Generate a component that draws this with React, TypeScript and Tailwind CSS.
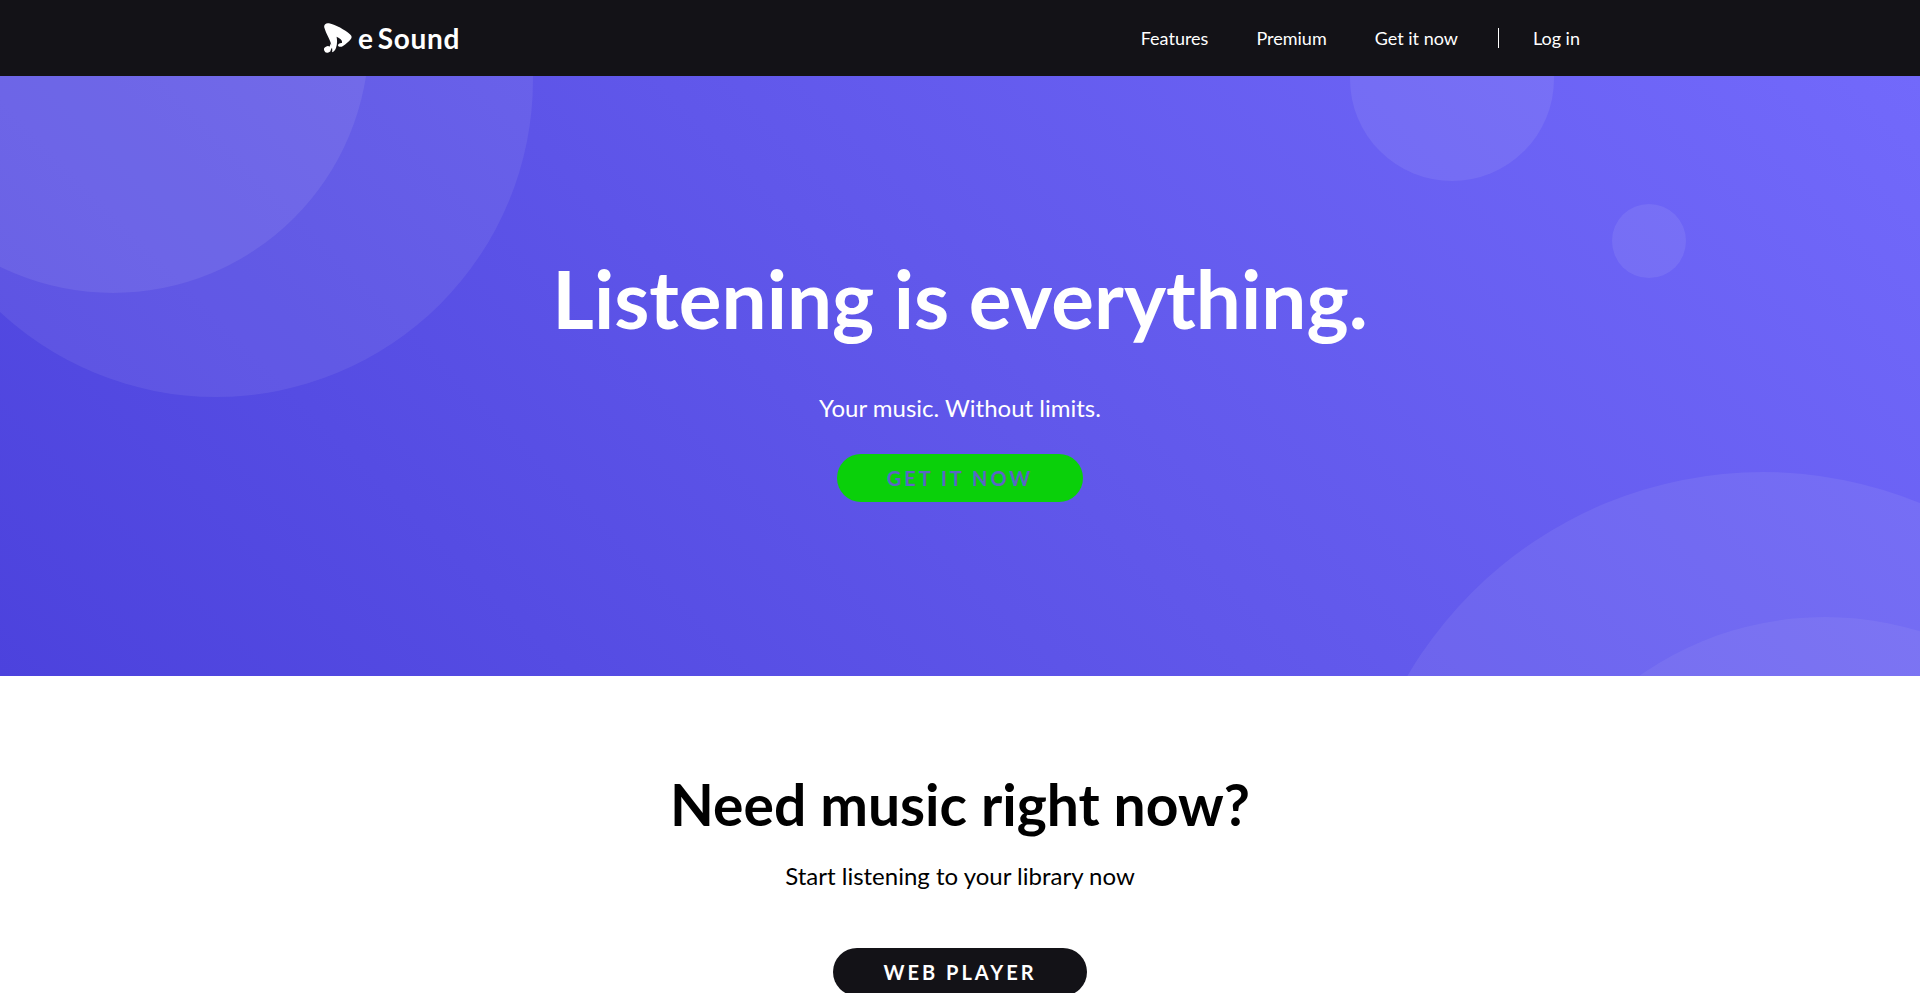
const navLinks = ['Features', 'Premium', 'Get it now'];

function Logo() {
  return (
    <a href="#" aria-label="eSound" className="flex items-center gap-1.5 text-white">
      <svg viewBox="0 0 28 30" className="h-[30px] w-7" fill="currentColor" aria-hidden="true">
        <path d="M0.3 4.6C-0.4 1.6 1.9-0.4 5 0.3C12 1.9 20.5 6.5 26.2 11.5C28 13.2 28.1 14.7 26.5 16.4C24.6 18.5 22 21 19 22.9C17.5 24.200 14.300 24.300 14 22.500C13.900 20.800 15.700 19.700 17.900 19.900C18.600 17.500 16.600 15.600 12.600 13.700C13.300 17.500 13.300 21.500 12 25C11.200 27.200 9.900 28.700 8 29.200C8.600 27.500 8.200 25.500 7.600 23C6.400 16.500 2 11 0.300 4.600Z" />
        <ellipse cx="3.4" cy="26.4" rx="3.4" ry="3.2" transform="rotate(-20 3.4 26.4)" />
        <path d="M5 25L7 20L8.5 24L6.5 27Z" />
      </svg>
      <span className="flex gap-1 text-[28px] font-bold leading-8 tracking-wide">
        <span>e</span>
        <span>Sound</span>
      </span>
    </a>
  );
}

function Header() {
  return (
    <header className="bg-[#131217]">
      <div className="mx-auto flex h-[76px] max-w-7xl items-center justify-between pl-1 pr-5">
        <Logo />
        <nav className="flex items-center text-lg text-white">
          <div className="flex items-center gap-12">
            {navLinks.map((label) => (
              <a key={label} href="#">{label}</a>
            ))}
          </div>
          <span className="ml-10 mr-[34px] h-5 w-px bg-white" />
          <a href="#">Log in</a>
        </nav>
      </div>
    </header>
  );
}

function Hero() {
  return (
    <section className="relative h-[600px] overflow-hidden bg-linear-45 from-[#4c42dd] via-[#6057ea] to-[#7269fb] text-white">
      <svg
        className="absolute inset-0 h-full w-full"
        viewBox="0 0 1920 600"
        preserveAspectRatio="xMidYMid slice"
        fill="white"
        aria-hidden="true"
      >
        <circle cx="216" cy="4" r="317" fillOpacity="0.07" />
        <circle cx="113" cy="-39" r="256" fillOpacity="0.08" />
        <circle cx="1452" cy="3" r="102" fillOpacity="0.08" />
        <circle cx="1649" cy="165" r="37" fillOpacity="0.08" />
        <circle cx="1763" cy="808" r="412" fillOpacity="0.07" />
        <circle cx="1825" cy="863" r="322" fillOpacity="0.06" />
      </svg>
      <div className="relative flex flex-col items-center pt-[174px]">
        <h1 className="text-[80px] font-bold leading-[96px]">Listening is everything.</h1>
        <p className="mt-11 text-2xl leading-9">Your music. Without limits.</p>
        <a
          href="#"
          className="mt-7 flex h-12 items-center rounded-full bg-[#0ad00a] px-[50px] text-[20px] font-bold tracking-[3px] text-[#5a66c5]"
        >
          GET IT NOW
        </a>
      </div>
    </section>
  );
}

function WebPlayer() {
  return (
    <section className="flex flex-col items-center bg-white pt-[94px] text-black">
      <h2 className="text-[57px] font-bold leading-[68px]">Need music right now?</h2>
      <p className="mt-5 text-2xl leading-9">Start listening to your library now</p>
      <a
        href="#"
        className="mt-[54px] flex h-12 items-center rounded-full bg-[#131217] px-[50px] text-[20px] font-bold tracking-[3px] text-white"
      >
        WEB PLAYER
      </a>
    </section>
  );
}

export default function App() {
  return (
    <div className="h-screen overflow-hidden bg-white font-['Lato',sans-serif]">
      <Header />
      <main>
        <Hero />
        <WebPlayer />
      </main>
    </div>
  );
}
